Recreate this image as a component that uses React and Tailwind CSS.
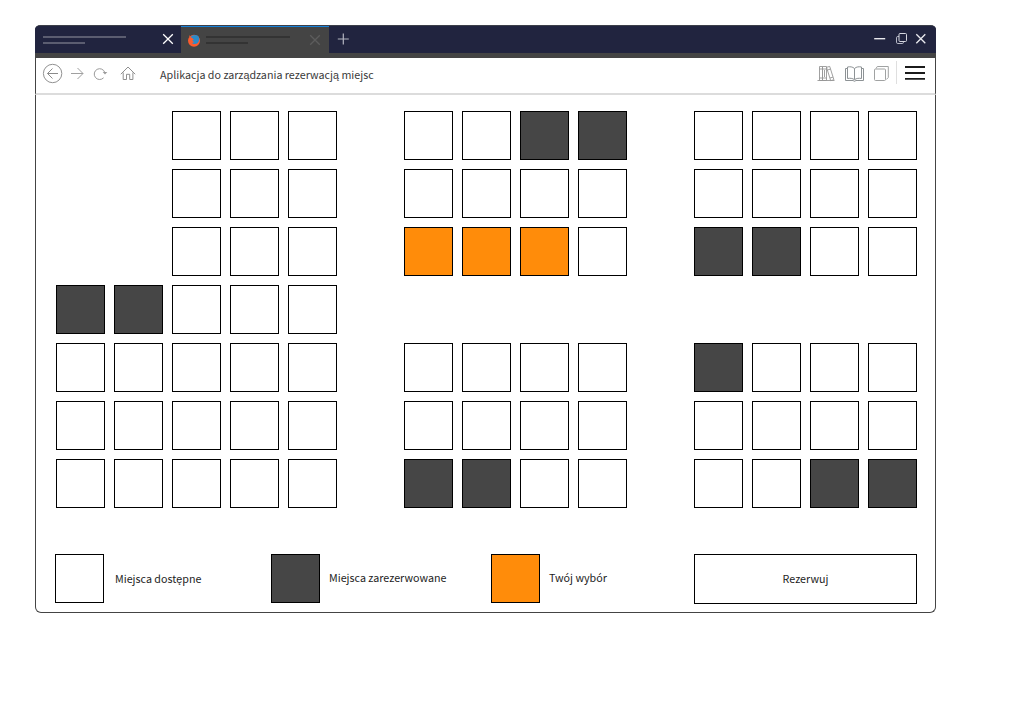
const SEATS = [
  '  ... ..RR ....',
  '  ... .... ....',
  '  ... SSS. RR..',
  'RR...          ',
  '..... .... R...',
  '..... .... ....',
  '..... RR.. ..RR',
];

const SEAT_STYLES = {
  '.': 'size-[49px] border border-black bg-white',
  R: 'size-[49px] border border-black bg-[#464646]',
  S: 'size-[49px] border border-black bg-[#ff8c0a]',
  ' ': 'size-[49px]',
};

function Seat({ kind }) {
  return <div className={SEAT_STYLES[kind]} />;
}

function Cross({ className }) {
  return (
    <svg width="12" height="12" viewBox="0 0 12 12" fill="none" stroke="currentColor" strokeWidth="1.3" className={className}>
      <path d="M1.2 1.2l9.6 9.6M10.8 1.2l-9.6 9.6" />
    </svg>
  );
}

function FirefoxIcon() {
  return (
    <svg width="14" height="14" viewBox="0 0 14 14" className="ml-[6px] mt-[7px]">
      <circle cx="7" cy="6.800" r="6" fill="#fb5b2e" />
      <path d="M3.500 3C5 .8 8.500.3 10.500 1.600c1.300 1 1.900 2.600 1.700 4.200-.3 2.700-2.300 4.400-4.500 4.300-1.400 0-2.300-.6-2.800-1.400 1.200.2 2-.2 2.600-.8-.9 0-2-.4-2-1.300.1-.6.800-.8 1.400-1.400-.9-.2-1.300-.7-1.500-1.200-.8-.2-1.300-.2-1.900-1z" fill="#2b8bc9" />
      <path d="M2 2.600l.6-1.300 1.100 1.500z" fill="#fb5b2e" />
    </svg>
  );
}

function TabStrip() {
  return (
    <div className="flex h-[33px] rounded-t-[5px] border-t border-[#3c3f49] bg-[#444444]">
      <div className="flex h-[27px] w-[146px] items-start rounded-tl-[4px] bg-[#21243f]">
        <div className="ml-[8px] mt-[10px] flex w-[84px] flex-col gap-1">
          <div className="h-[2px] w-[83px] bg-[#5b5d70]" />
          <div className="h-[2px] w-[42px] bg-[#5b5d70]" />
        </div>
        <Cross className="ml-[34.500px] mt-[7px] text-white" />
      </div>
      <div className="flex h-[27px] w-[148px] items-start border-t border-[#1681d8]">
        <FirefoxIcon />
        <div className="ml-[5px] mt-[9px] flex w-[84px] flex-col gap-1">
          <div className="h-[2px] w-[84px] bg-[#333333]" />
          <div className="h-[2px] w-[42px] bg-[#333333]" />
        </div>
        <Cross className="ml-[19px] mt-[7px] text-[#5c5c5c]" />
      </div>
      <div className="flex h-[27px] flex-1 items-start rounded-tr-[4px] bg-[#21243f]">
        <svg width="12" height="12" viewBox="0 0 12 12" className="ml-[8px] mt-[7px]" fill="none" stroke="#b4b5c0" strokeWidth="1.2">
          <path d="M6.300 .5v11M.8 6h11" />
        </svg>
        <div className="flex-1" />
        <svg width="54" height="12" viewBox="0 0 54 12" className="mr-[8px] mt-[7px]" fill="none" stroke="#e9e9ee">
          <path d="M.2 5.700h11" strokeWidth="1.400" />
          <path d="M25 3.500h-1.200q-1.300 0-1.300 1.300v4.400q0 1.300 1.300 1.300h4.400q1.300 0 1.300-1.300V8.500" stroke="#b8bac7" />
          <rect x="25" y=".5" width="7.500" height="8" rx="1" stroke="#d5d6df" />
          <path d="M42.300 1.300l9 9M51.300 1.300l-9 9" strokeWidth="1.300" />
        </svg>
      </div>
    </div>
  );
}

function Toolbar() {
  return (
    <div className="flex h-[37px] border-x border-b-2 border-x-[#444444] border-b-[#dcdcdc] bg-white">
      <svg width="104" height="30" viewBox="0 0 104 30" fill="none" stroke="#929292" className="ml-[4px]">
        <circle cx="12.600" cy="15.500" r="9.200" />
        <path d="M18 15.500H7.500M12.500 10.500l-5 5 5 5" stroke="#8b8b8b" />
        <path d="M31 15.500h12M37.500 10l5.500 5.500-5.500 5.500" stroke="#a0a0a0" />
        <path d="M64.800 14.500a5.400 5.400 0 1 0-1.200 5.300" stroke="#9a9a9a" />
        <path d="M62.700 14h4.600l-2.300 2.500z" fill="#9a9a9a" stroke="none" />
        <path d="M80.800 16.200L88 9l7.200 7.200M83.200 14.500V21.500h3.300v-5.200h3.200v5.200h3.200v-7" stroke="#8f8f8f" />
      </svg>
      <div className="ml-[16px] mt-[9px] whitespace-nowrap text-[10.72px] leading-[16px] text-[#393939]">
        Aplikacja do zarządzania rezerwacją miejsc
      </div>
      <div className="flex-1" />
      <svg width="112" height="30" viewBox="0 0 112 30" fill="none" stroke="#969696" className="mr-[7px]">
        <g strokeWidth=".9">
          <path d="M3.500 8.500h3v14h-3zM6.500 8.500h4v14h-4zM3.500 11h7M3.500 20h7M10.500 9.300l3.200-.9 4.200 13.300-3.200 1zM11.500 12l3-.9M14 20l3-.9M1.500 22.500h17M8.500 12v7" />
        </g>
        <path d="M38.500 10.500c-2-1.800-4.500-2-7-1.500v11.500c2.500-.5 5-.3 7 1.200 2-1.500 4.500-1.700 7-1.200V9c-2.500-.5-5-.3-7 1.500v11M31.500 10.500h-2v12h7.500l1.500.8 1.500-.8h7.500v-12h-2" stroke="#8d9295" />
        <rect x="58.500" y="11" width="11" height="11.500" rx="1" stroke="#a0a2a2" />
        <path d="M60 10.500l1.300-2h11v11l-2 2" stroke="#a0a2a2" />
        <path d="M80.500 3v23" stroke="#dfdfdf" />
        <path d="M89 9h20M89 15h20M89 20.800h20" stroke="#1b1b1b" strokeWidth="1.800" />
      </svg>
    </div>
  );
}

function Legend() {
  return (
    <div className="mt-[46px] flex h-[50px] pl-[19px] pr-[18px] text-[10.72px] leading-[16px] text-[#1c1c1c]">
      <div className="flex w-[216px] gap-[11px]">
        <Seat kind="." />
        <span className="mt-[17px]">Miejsca dostępne</span>
      </div>
      <div className="flex w-[220px] gap-[9px]">
        <Seat kind="R" />
        <span className="mt-[16px]">Miejsca zarezerwowane</span>
      </div>
      <div className="flex w-[203px] gap-[9px]">
        <Seat kind="S" />
        <span className="mt-[16px]">Twój wybór</span>
      </div>
      <button className="flex h-[50px] w-[223px] justify-center border border-black bg-white pt-[16px]">
        Rezerwuj
      </button>
    </div>
  );
}

export default function App() {
  return (
    <div className="h-[722px] w-[1011px] bg-white pl-[35px] pt-[25px] font-['Noto_Sans_CJK_SC',sans-serif]">
      <div className="flex h-[588px] w-[901px] flex-col">
        <TabStrip />
        <Toolbar />
        <main className="h-[518px] rounded-b-[6px] border-x border-b border-[#444444] pt-[16px]">
          <div className="ml-[20px] grid grid-cols-[repeat(15,49px)] gap-[9px]">
            {SEATS.flatMap((row, r) => [...row].map((kind, c) => <Seat key={`${r}-${c}`} kind={kind} />))}
          </div>
          <Legend />
        </main>
      </div>
    </div>
  );
}
